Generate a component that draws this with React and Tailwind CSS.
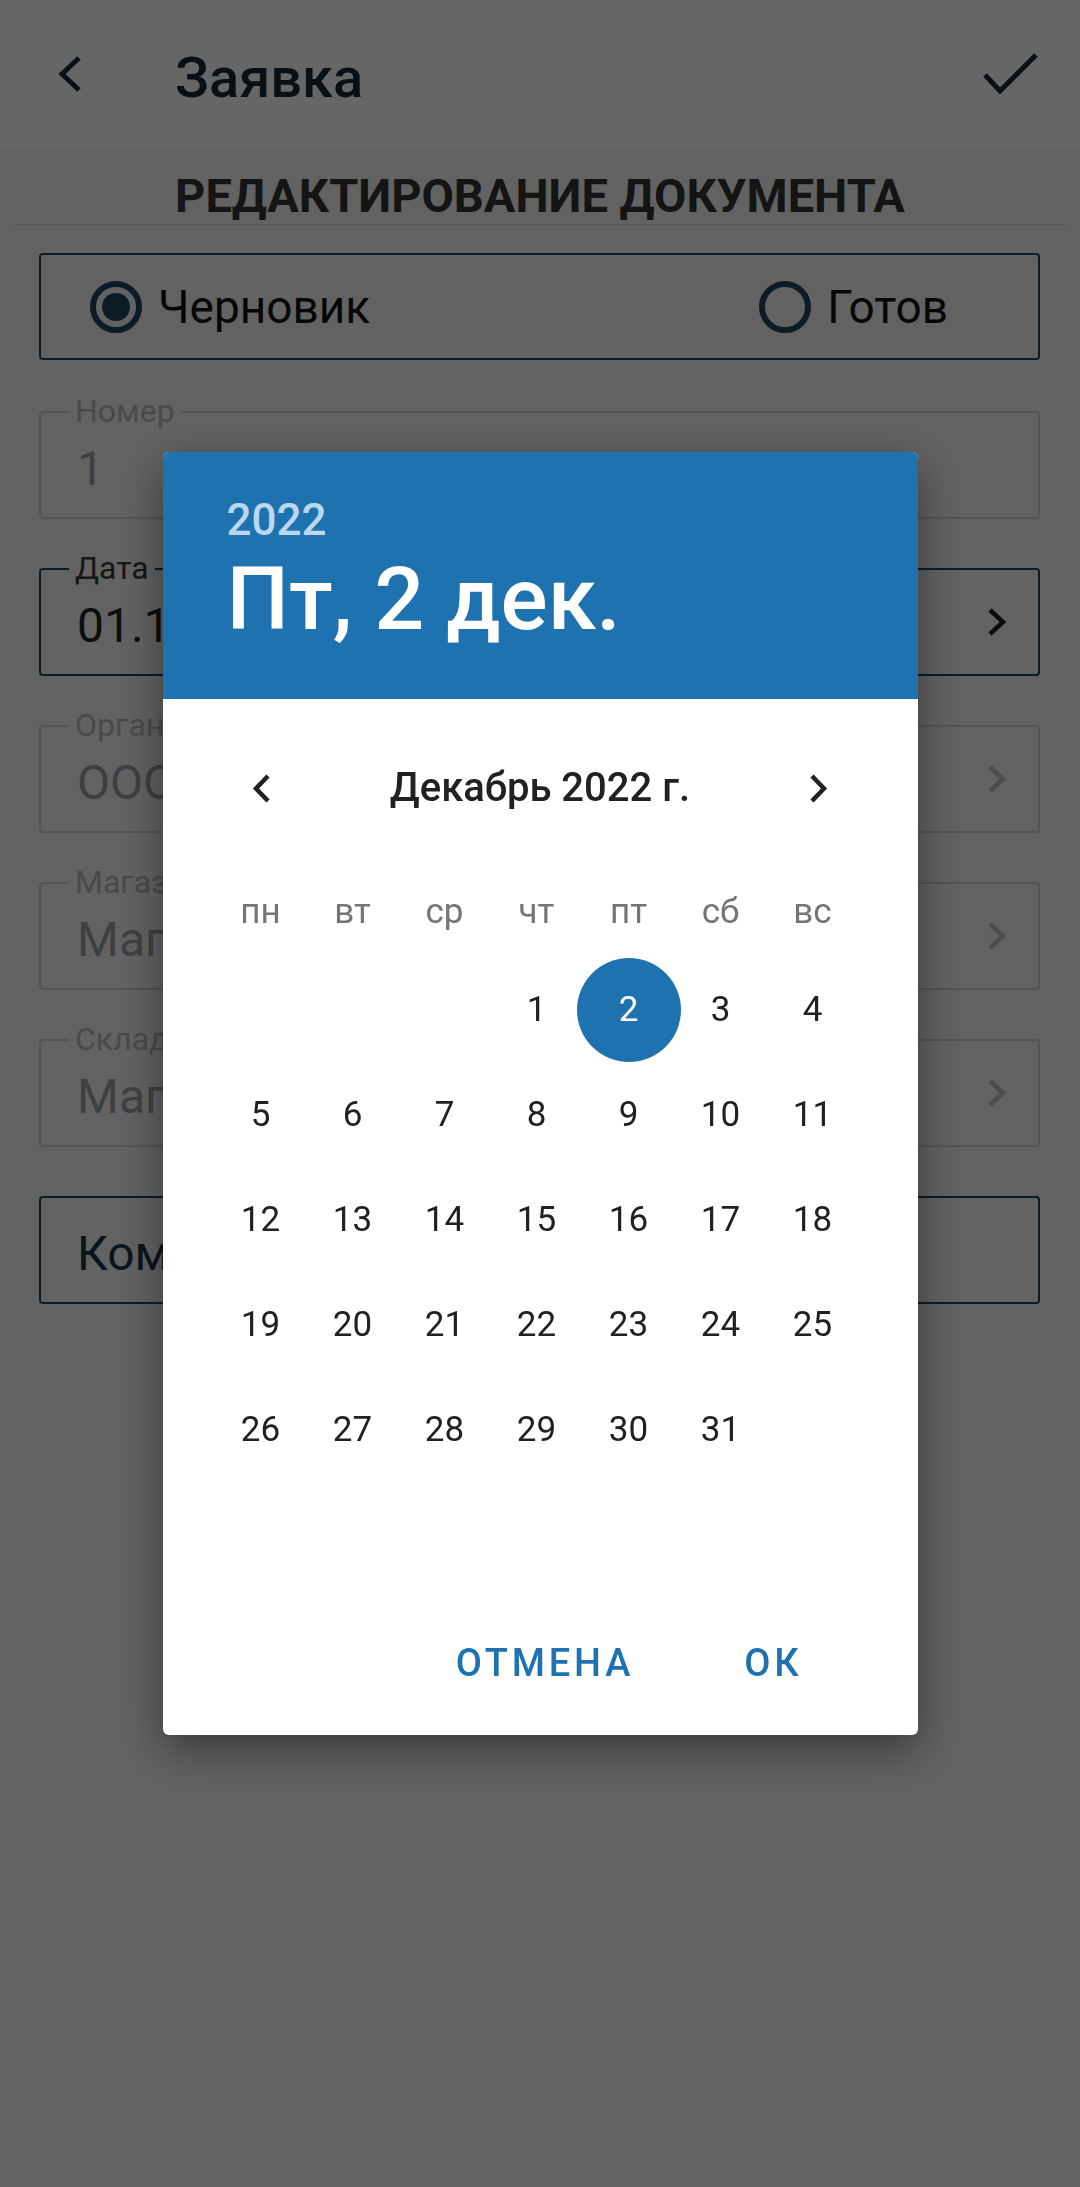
import React from 'react';

const weekDays = ['пн', 'вт', 'ср', 'чт', 'пт', 'сб', 'вс'];

// December 2022 starts on Thursday; the picker always reserves six rows
const buildWeeks = () => {
  const cells = [null, null, null, ...Array.from({ length: 31 }, (_, i) => i + 1)];
  while (cells.length < 42) cells.push(null);
  const weeks = [];
  for (let i = 0; i < 42; i += 7) weeks.push(cells.slice(i, i + 7));
  return weeks;
};

const fields = [
  { label: 'Номер', value: '1' },
  { label: 'Дата', value: '01.12.2022', active: true, chevron: true },
  { label: 'Организация', value: 'ООО "Ромашка"', chevron: true },
  { label: 'Магазин', value: 'Магазин №1', chevron: true },
  { label: 'Склад', value: 'Магазин №1', chevron: true },
];

const Chevron = ({ dir = 'right', className = '', color = 'currentColor', stroke = 4.5, w = 20, h = 30 }) => (
  <svg width={w} height={h} viewBox={`0 0 ${w} ${h}`} className={className} fill="none">
    {dir === 'right' ? (
      <polyline points={`3,3 ${w - 4},${h / 2} 3,${h - 3}`} stroke={color} strokeWidth={stroke} />
    ) : (
      <polyline points={`${w - 3},3 4,${h / 2} ${w - 3},${h - 3}`} stroke={color} strokeWidth={stroke} />
    )}
  </svg>
);

const Radio = ({ checked, label }) => (
  <div className="flex items-center">
    <div className="w-[52px] h-[52px] rounded-full border-[6px] border-[#1f4660] flex items-center justify-center">
      {checked && <div className="w-[28px] h-[28px] rounded-full bg-[#1f4660]" />}
    </div>
    <span className="ml-[16px] text-[46px] leading-[46px] text-[#111]">{label}</span>
  </div>
);

const Field = ({ label, value, active, chevron }) => (
  <div
    className={`relative h-[108px] rounded-[4px] border-2 flex items-center pl-[36px] pr-[31px] pt-[8px] ${
      active ? 'border-[#1f4660]' : 'border-[#d2d2d2]'
    }`}
  >
    <span
      className={`absolute -top-[18px] left-[28px] bg-[#f5f5f5] px-[6px] text-[32px] leading-[32px] ${
        active ? 'text-[#383838]' : 'text-[#b9b9b9]'
      }`}
    >
      {label}
    </span>
    <span className={`flex-1 truncate text-[48px] leading-[48px] ${active ? 'text-[#222]' : 'text-[#9aa0a6]'}`}>
      {value}
    </span>
    {chevron && (
      <Chevron className="-mt-[8px]" color={active ? '#15212c' : '#b8bec6'} />
    )}
  </div>
);

export default function App() {
  const weeks = buildWeeks();

  return (
    <div className="relative min-h-[2187px] bg-[#f5f5f5] font-['Roboto',sans-serif]">
      {/* toolbar */}
      <header className="h-[148px] bg-white flex items-center pl-[58px] pr-[40px]">
        <Chevron dir="left" w={24} h={38} stroke={5} color="#14283a" />
        <h1 className="ml-[93px] mt-[8px] text-[56px] leading-[56px] font-medium text-[#14283a]">Заявка</h1>
        <svg width="60" height="50" viewBox="0 0 60 50" fill="none" className="ml-auto">
          <polyline points="5,26 20,42 56,6" stroke="#14283a" strokeWidth="5" />
        </svg>
      </header>

      <div className="pt-[25px] text-center text-[47px] leading-[46px] font-bold text-[#333]">
        РЕДАКТИРОВАНИЕ ДОКУМЕНТА
      </div>
      <div className="mx-[14px] mt-[5px] h-px bg-[#d9d9d9]" />

      <div className="pl-[39px] pr-[40px]">
        <div className="mt-[28px] h-[107px] rounded-[4px] border-2 border-[#1f4660] flex items-center justify-between pl-[49px] pr-[90px]">
          <Radio checked label="Черновик" />
          <Radio label="Готов" />
        </div>

        <div className="mt-[51px] flex flex-col gap-[49px]">
          {fields.map((f) => (
            <Field key={f.label} {...f} />
          ))}
          <div className="h-[108px] rounded-[4px] border-2 border-[#1f4660] flex items-center pl-[36px] pt-[8px]">
            <span className="text-[48px] leading-[48px] text-[#1a3448]">Комментарий</span>
          </div>
        </div>
      </div>

      {/* date picker dialog */}
      <div className="fixed inset-0 bg-black/60 flex items-center justify-center">
        <div className="w-[755px] h-[1283px] bg-white rounded-[6px] overflow-hidden shadow-[0_14px_44px_rgba(0,0,0,0.45)] flex flex-col">
          <div className="h-[247px] shrink-0 bg-[#1e72b0] pl-[64px] pt-[46px]">
            <div className="text-[44px] leading-[44px] font-medium text-[#bdd8ee]">2022</div>
            <div className="mt-[13px] text-[88px] leading-[88px] font-medium text-white">Пт, 2 дек.</div>
          </div>

          <div className="mt-[42px] h-[94px] flex items-center justify-between px-[89px]">
            <Chevron dir="left" w={19} h={31} stroke={4.5} color="#212121" />
            <span className="text-[40px] leading-[40px] font-medium text-[#212121]">Декабрь 2022 г.</span>
            <Chevron w={19} h={31} stroke={4.5} color="#212121" />
          </div>

          <div className="ml-[52px] w-[644px]">
            <div className="mt-[30px] h-[92px] grid grid-cols-7 items-center">
              {weekDays.map((d) => (
                <span key={d} className="text-center text-[35px] leading-[35px] text-[#757575]">
                  {d}
                </span>
              ))}
            </div>
            {weeks.map((week, wi) => (
              <div key={wi} className="h-[105px] grid grid-cols-7">
                {week.map((day, di) => (
                  <div key={di} className="flex items-center justify-center">
                    {day === 2 ? (
                      <div className="shrink-0 min-w-[104px] w-[104px] h-[104px] rounded-full bg-[#1e72b0] flex items-center justify-center text-[35px] leading-[35px] text-white">
                        {day}
                      </div>
                    ) : (
                      <span className="text-[35px] leading-[35px] text-[#212121]">{day}</span>
                    )}
                  </div>
                ))}
              </div>
            ))}
          </div>

          <div className="mt-[28px] h-[96px] flex items-center justify-end gap-[110px] pr-[115px]">
            <button className="text-[38px] leading-[38px] font-medium tracking-[0.1em] text-[#1e72b0]">ОТМЕНА</button>
            <button className="text-[38px] leading-[38px] font-medium tracking-[0.1em] text-[#1e72b0]">ОК</button>
          </div>
        </div>
      </div>
    </div>
  );
}
